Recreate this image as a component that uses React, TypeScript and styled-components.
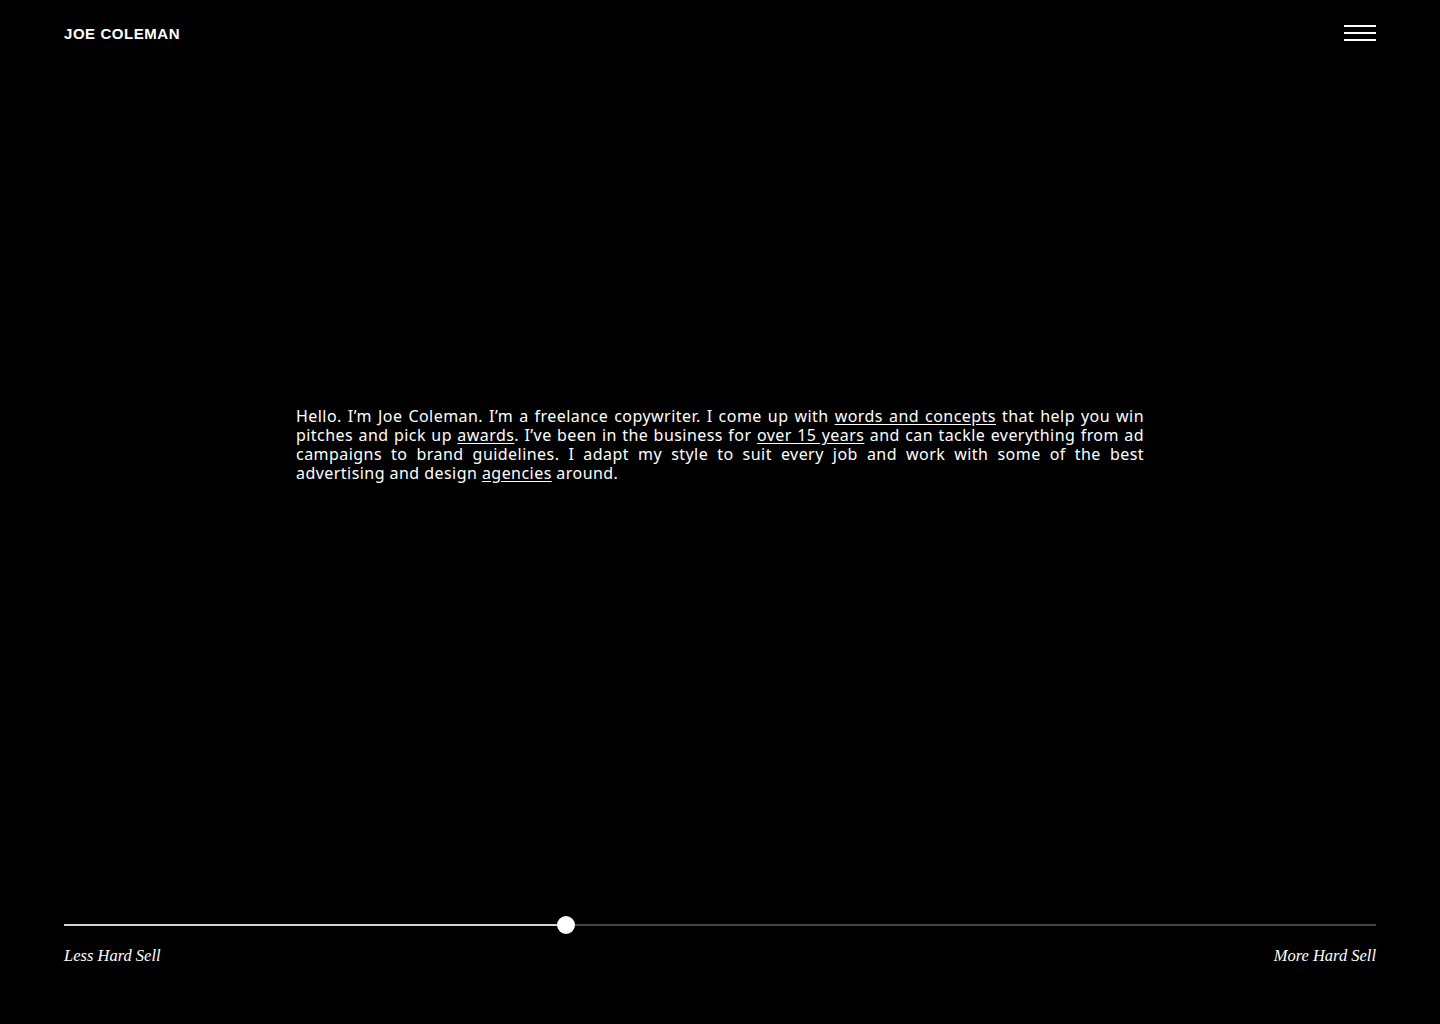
import * as React from "react";
import styled, { createGlobalStyle } from "styled-components";

const Global = createGlobalStyle`
  html, body {
    margin: 0;
    padding: 0;
    background: #000;
  }
`;

const Page = styled.div`
  height: 1024px;
  display: flex;
  flex-direction: column;
  background: #000;
  color: #fff;
  padding: 0 64px;
  box-sizing: border-box;
`;

const Header = styled.header`
  display: flex;
  justify-content: space-between;
  align-items: center;
  height: 66px;
`;

const Logo = styled.div`
  font-family: "Liberation Sans", Arial, sans-serif;
  font-weight: bold;
  font-size: 15px;
  letter-spacing: 0.55px;
  color: #fff;
`;

const Burger = styled.button`
  width: 32px;
  display: flex;
  flex-direction: column;
  gap: 5px;
  padding: 0;
  margin-top: -1px;
  background: none;
  border: 0;
  cursor: pointer;
`;

const BurgerLine = styled.span`
  display: block;
  height: 2px;
  background: #fff;
`;

const Main = styled.main`
  flex: 1;
  display: flex;
  justify-content: center;
  padding-top: 341px;
`;

const Intro = styled.p`
  width: 848px;
  margin: 0;
  font-family: "Noto Sans", sans-serif;
  font-size: 16px;
  line-height: 19px;
  letter-spacing: 0.45px;
  text-align: justify;
  color: #fff;
`;

const Link = styled.a`
  color: #fff;
  text-decoration: underline;
  text-underline-offset: 2px;
`;

const Footer = styled.footer`
  padding-bottom: 58px;
`;

const Track = styled.div`
  position: relative;
  height: 2px;
  background: #444;
`;

const Fill = styled.div`
  height: 2px;
  background: #d4d4d4;
`;

const Thumb = styled.div`
  position: absolute;
  top: 50%;
  width: 18px;
  height: 18px;
  border-radius: 50%;
  background: #fff;
  transform: translate(-50%, -50%);
`;

const Labels = styled.div`
  display: flex;
  justify-content: space-between;
  margin-top: 20px;
  font-family: "Liberation Serif", "Times New Roman", serif;
  font-style: italic;
  font-size: 16.5px;
  color: #fff;
`;

const value = 38.26;

export default function App() {
  return (
    <Page>
      <Global />
      <Header>
        <Logo>JOE COLEMAN</Logo>
        <Burger aria-label="Menu">
          <BurgerLine />
          <BurgerLine />
          <BurgerLine />
        </Burger>
      </Header>
      <Main>
        <Intro>
          Hello. I’m Joe Coleman. I’m a freelance copywriter. I come up with{" "}
          <Link href="#">words and concepts</Link> that help you win pitches and pick up{" "}
          <Link href="#">awards</Link>. I’ve been in the business for{" "}
          <Link href="#">over 15 years</Link> and can tackle everything from ad campaigns to brand
          guidelines. I adapt my style to suit every job and work with some of the best advertising
          and design <Link href="#">agencies</Link> around.
        </Intro>
      </Main>
      <Footer>
        <Track>
          <Fill style={{ width: `${value}%` }} />
          <Thumb style={{ left: `${value}%` }} />
        </Track>
        <Labels>
          <span>Less Hard Sell</span>
          <span>More Hard Sell</span>
        </Labels>
      </Footer>
    </Page>
  );
}
